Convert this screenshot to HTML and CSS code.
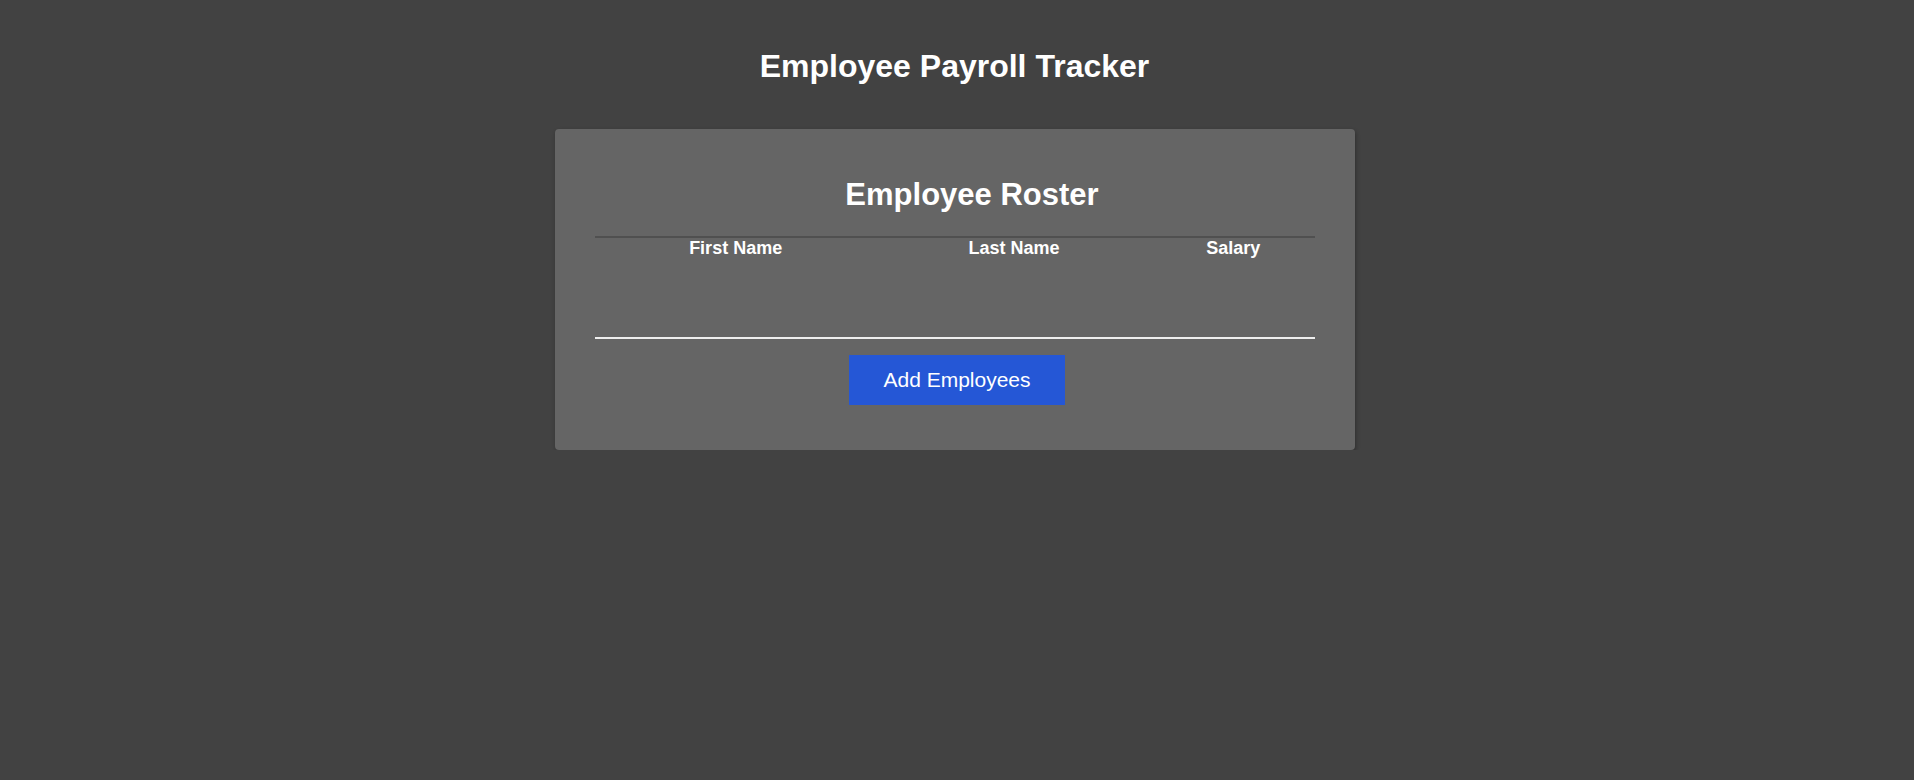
FILE: index.html
```html
<!DOCTYPE html>
<html lang="en">
<head>
<meta charset="utf-8">
<title>Employee Payroll Tracker</title>
<link rel="stylesheet" href="styles.css">
</head>
<body>
  <main class="page">
    <h1 class="page-title">Employee Payroll Tracker</h1>
    <section class="card">
      <h2 class="card-title">Employee Roster</h2>
      <div class="roster">
        <table class="roster-table">
          <thead>
            <tr>
              <th>First Name</th>
              <th>Last Name</th>
              <th>Salary</th>
            </tr>
          </thead>
          <tbody></tbody>
        </table>
      </div>
      <div class="actions">
        <button class="add-btn" type="button">Add Employees</button>
      </div>
    </section>
  </main>
</body>
</html>
```

FILE: styles.css
```css
html, body {
  margin: 0;
  padding: 0;
  background: #424242;
  font-family: "Liberation Sans", Arial, Helvetica, sans-serif;
  color: #ffffff;
}

.page {
  padding-top: 48px;
}

.page-title {
  margin: 0 0 44px;
  padding-right: 5px;
  font-size: 32px;
  font-weight: 700;
  text-align: center;
}

.card {
  width: 800px;
  box-sizing: border-box;
  margin: 0 auto 0 calc(50% - 402px);
  padding: 48px 40px 45px;
  background: #656565;
  border-radius: 4px;
  box-shadow: 1px 2px 4px rgba(0, 0, 0, 0.3);
}

.card-title {
  margin: 0 0 23px;
  padding-left: 34px;
  font-size: 31px;
  font-weight: 700;
  text-align: center;
}

.roster {
  border-top: 2px solid #505050;
  border-bottom: 2px solid #eeeeee;
  height: 99px;
}

.roster-table {
  width: 100%;
  border-spacing: 0;
}

.roster-table th {
  padding: 0;
  font-size: 18px;
  font-weight: 700;
  text-align: center;
}

.actions {
  display: flex;
  justify-content: center;
  padding-top: 16px;
  padding-left: 4px;
}

.add-btn {
  width: 216px;
  height: 50px;
  padding: 0;
  border: none;
  background: #2557d6;
  color: #ffffff;
  font-family: "Liberation Sans", Arial, Helvetica, sans-serif;
  font-size: 21px;
  cursor: pointer;
}
```
